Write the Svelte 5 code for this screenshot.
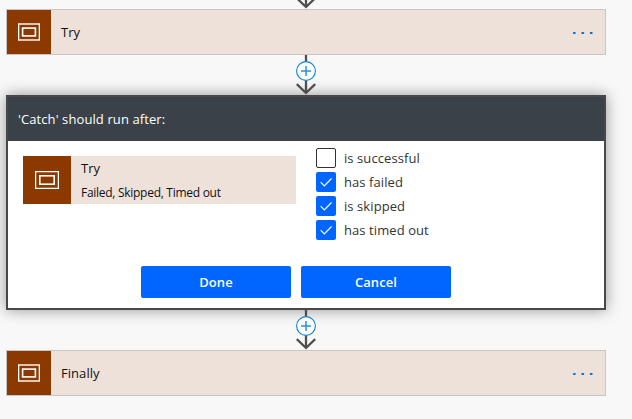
<script>
  let conditions = $state([
    { label: 'is successful', checked: false },
    { label: 'has failed', checked: true },
    { label: 'is skipped', checked: true },
    { label: 'has timed out', checked: true }
  ]);
</script>

{#snippet scopeIcon(large)}
  <span class="scope" class:large>
    {#if large}
      <svg width="24" height="18" viewBox="0 0 24 18" fill="none" stroke="#fff">
        <rect x=".6" y=".6" width="22.8" height="16.8" stroke-width="1.3" />
        <rect x="4.8" y="4.8" width="14.4" height="8.4" stroke-width="1.6" />
      </svg>
    {:else}
      <svg width="22" height="18" viewBox="0 0 22 18" fill="none" stroke="#fff">
        <rect x=".6" y="1" width="20.8" height="16" stroke-width="1.4" />
        <rect x="4.6" y="5.1" width="12.8" height="7.8" stroke-width="1.6" />
      </svg>
    {/if}
  </span>
{/snippet}

{#snippet connector()}
  <div class="connector">
    <svg width="24" height="40" viewBox="0 0 24 40" fill="none">
      <path d="M12 0V38M2.8 29.2L12 38L21.2 29.2" stroke="#4f4f4f" stroke-width="2.3" />
      <circle cx="12" cy="16" r="9.4" fill="#fff" stroke="#0f7fda" stroke-width="1.1" />
      <path d="M12 11V21M7 16H17" stroke="#2f8ede" stroke-width="1.5" />
    </svg>
  </div>
{/snippet}

{#snippet card(title)}
  <div class="card">
    {@render scopeIcon(false)}
    <span class="title">{title}</span>
    <svg class="dots" width="22" height="4" viewBox="0 0 22 4" fill="#0870d8">
      <rect x="1" y="1" width="2.6" height="2" rx=".4" />
      <rect x="9.5" y="1" width="2.6" height="2" rx=".4" />
      <rect x="17.9" y="1" width="2.6" height="2" rx=".4" />
    </svg>
  </div>
{/snippet}

<main>
  <div class="top">
    <svg width="24" height="9" viewBox="0 0 24 9" fill="none">
      <path d="M12 -2V7M2.8 -1.8L12 7L21.2 -1.8" stroke="#4f4f4f" stroke-width="2.3" />
    </svg>
  </div>
  {@render card('Try')}
  {@render connector()}
  <section class="dialog">
    <header><span>'Catch' should run after:</span></header>
    <div class="content">
      <div class="source">
        {@render scopeIcon(true)}
        <div class="info">
          <div class="name">Try</div>
          <div class="status">Failed, Skipped, Timed out</div>
        </div>
      </div>
      <div class="options">
        {#each conditions as c}
          <label>
            <input type="checkbox" bind:checked={c.checked} />
            <span class="box" class:on={c.checked}>
              {#if c.checked}
                <svg width="20" height="20" viewBox="0 0 20 20" fill="none">
                  <path d="M4.7 10.2L8.3 13.8L15.5 6.5" stroke="#fff" stroke-width="1.2" />
                </svg>
              {/if}
            </span>
            <span class="text">{c.label}</span>
          </label>
        {/each}
      </div>
    </div>
    <div class="actions">
      <button>Done</button>
      <button>Cancel</button>
    </div>
  </section>
  {@render connector()}
  {@render card('Finally')}
</main>

<style>
  :global(body) { background: #f8f8f8; }
  main {
    box-sizing: border-box;
    width: 632px;
    height: 419px;
    overflow: hidden;
    padding-left: 6px;
    background: #f8f8f8;
    font-family: "Open Sans", "Noto Sans", sans-serif;
    font-size: 13px;
    color: #111;
  }
  svg { display: block; }
  .top, .connector { width: 600px; display: flex; justify-content: center; }
  .top { height: 9px; }
  .connector { height: 40px; position: relative; }
  .card {
    box-sizing: border-box;
    width: 600px;
    height: 46px;
    border: 1px solid #c6c6c6;
    background: #eee1da;
    display: flex;
    align-items: center;
  }
  .scope {
    width: 44px;
    align-self: stretch;
    flex: none;
    background: #8c3900;
    display: flex;
    align-items: center;
    justify-content: center;
  }
  .scope.large { width: 48px; }
  .title { flex: 1; padding-left: 10px; letter-spacing: 0.05px; }
  .dots { margin: 2px 11px 0 0; }
  .dialog {
    box-sizing: border-box;
    width: 600px;
    height: 215px;
    border: 2px solid #484848;
    background: #fff;
    box-shadow: 0 0 14px rgba(0, 0, 0, 0.4);
  }
  header {
    height: 44px;
    background: #3b4148;
    color: #fff;
    display: flex;
    align-items: center;
    padding-left: 10px;
    letter-spacing: 0.1px;
  }
  .content { display: flex; height: 125px; padding-left: 15px; box-sizing: border-box; }
  .source { display: flex; width: 273px; height: 48px; margin-top: 15px; background: #eee1da; }
  .info { padding-left: 10px; white-space: nowrap; }
  .name { height: 25px; line-height: 25px; }
  .status { height: 23px; line-height: 23px; font-size: 12px; letter-spacing: -0.28px; }
  .options { display: flex; flex-direction: column; gap: 4px; margin: 7px 0 0 20px; }
  label { display: flex; align-items: center; height: 20px; color: #333; }
  input { appearance: none; width: 0; height: 0; margin: 0; }
  .box {
    box-sizing: border-box;
    width: 20px;
    height: 20px;
    border: 1px solid #323130;
    border-radius: 2px;
    background: #fff;
  }
  .box.on { border: 0; background: #0066ff; }
  .text { padding-left: 8px; white-space: nowrap; letter-spacing: 0.08px; }
  .actions { display: flex; gap: 10px; padding-left: 133px; }
  button {
    width: 150px;
    height: 32px;
    padding: 0;
    border: 0;
    border-radius: 2px;
    background: #0066ff;
    color: #fff;
    font: 600 13px "Open Sans", "Noto Sans", sans-serif;
    letter-spacing: 0.1px;
  }
</style>
